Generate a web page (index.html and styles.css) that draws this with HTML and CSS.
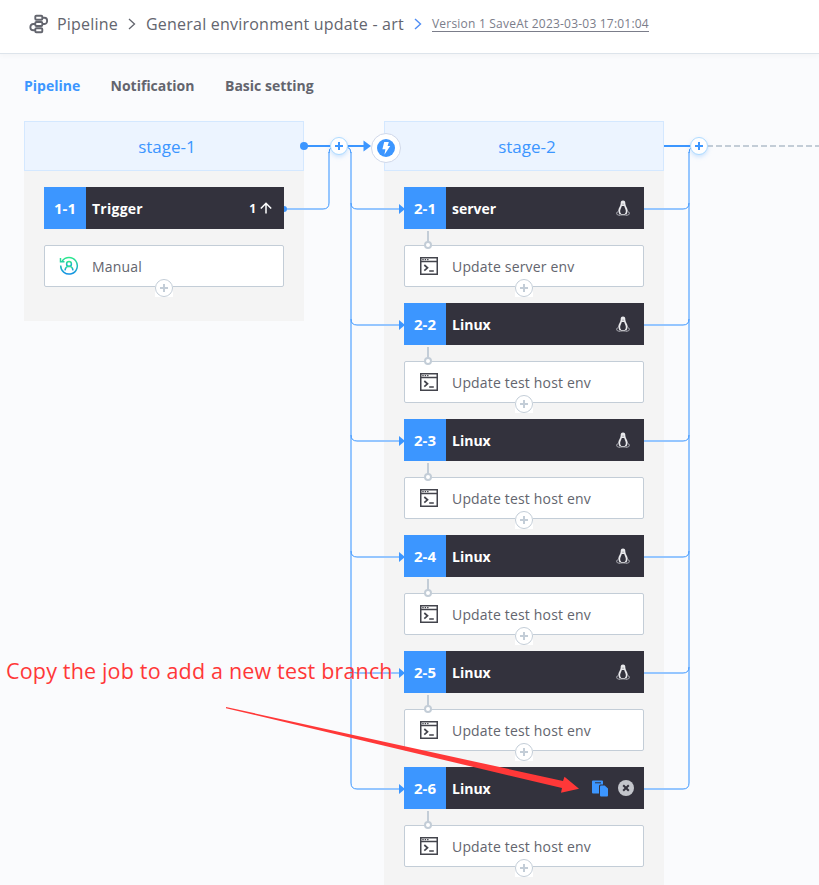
FILE: index.html
```
<!DOCTYPE html>
<html lang="en">
<head>
<meta charset="utf-8">
<title>Pipeline</title>
<link rel="stylesheet" href="styles.css">
</head>
<body>
<svg width="0" height="0" class="defs" aria-hidden="true">
  <defs>
    <linearGradient id="manual" x1="0" y1="0" x2="0" y2="1"><stop offset="0" stop-color="#2ce88c"/><stop offset="1" stop-color="#1592e6"/></linearGradient>
    <symbol id="plus" viewBox="0 0 18 18"><circle cx="9" cy="9" r="8.5" fill="#fff" stroke="#c3cdd7"/><path d="M9 5v8M5 9h8" stroke="#c3cdd7" stroke-width="2"/></symbol>
    <symbol id="term" viewBox="0 0 18 18"><path d="M.75.75h16.5v16.5H.75zM.75 4.6h16.5" fill="none" stroke="#43444c" stroke-width="1.5"/><path d="M2.3 2.6h1.4m1 0h1.4m1 0h1.4" stroke="#43444c" stroke-width="1.3"/><path d="M4.3 8l3.2 2.8-3.2 2.8M9.2 14h4.6" fill="none" stroke="#43444c" stroke-width="1.7"/></symbol>
    <symbol id="tux" viewBox="0 0 14 17"><path d="M7 .5C5.3.5 4.500 1.700 4.700 3.600 4.700 6 2.500 7.800 2.200 11L3.500 14.500h7L11.800 11C11.500 7.800 9.300 6 9.300 3.600 9.500 1.700 8.700.5 7 .5z" fill="#e9e9ec"/><path d="M5.800 6h2.400c.3 1.700 2 3.600 1.600 6.200L8.700 14H5.300l-1.100-1.800C3.800 9.600 5.500 7.700 5.800 6z" fill="#33323d"/><path d="M2.600 11.200L.7 12.800c-.5 1.300.8 2.200 3 2.700l1.700-1M11.400 11.200l1.900 1.600c.5 1.300-.8 2.200-3 2.700l-1.700-1" fill="none" stroke="#92929a" stroke-width="1.100"/><path d="M5 14.800h4" stroke="#d5d5d9"/><path d="M6 3.800h2L7 5z" fill="#85858d"/></symbol>
  </defs>
</svg>
<header class="topbar">
  <svg class="logo" width="20" height="20" viewBox="0 0 20 20" fill="none" stroke="#63656e" stroke-width="1.9"><rect x="6.300" y="1.700" width="7" height="4" rx="1"/><rect x="6.300" y="8" width="7" height="4" rx="1"/><rect x="6.300" y="14.300" width="7" height="4" rx="1"/><path d="M13.300 3.700h2.200c3.500 0 3.500 6.300 0 6.300h-2.200M6.300 10H4.500C.3 10 .3 16.300 4.500 16.300h1.800"/></svg>
  <span class="crumb root">Pipeline</span>
  <svg class="chev" width="8" height="14" viewBox="0 0 8 14"><path d="M1 2l5.500 5L1 12" fill="none" stroke="#63656e" stroke-width="1.300"/></svg>
  <span class="crumb name">General environment update - art</span>
  <svg class="chev blue" width="8" height="14" viewBox="0 0 8 14"><path d="M1 2l5.500 5L1 12" fill="none" stroke="#4f8df5" stroke-width="1.400"/></svg>
  <span class="version">Version 1 SaveAt 2023-03-03 17:01:04</span>
</header>
<main class="editor">
  <nav class="tabs"><a class="tab active">Pipeline</a><a class="tab notify">Notification</a><a class="tab basic">Basic setting</a></nav>
  <div class="stages">
    <section class="stage">
      <h2 class="stage-title">stage-1</h2>
      <div class="job">
        <div class="job-head"><span class="num">1-1</span><span class="job-name trigger">Trigger</span><span class="count">1</span><svg class="up" width="12" height="12" viewBox="0 0 12 12"><path d="M6 11.500V1.500M.8 6.500L6 1.300l5.200 5.200" fill="none" stroke="#fff" stroke-width="1.500"/></svg></div>
        <div class="atom"><svg width="20" height="20" viewBox="0 0 20 20" fill="none" stroke="url(#manual)" stroke-width="1.500"><path d="M3.200 5A8.300 8.300 0 1 1 1.700 9.500M1.500 2v3.700h4"/><circle cx="10" cy="8" r="2.400"/><path d="M6 14.300c.4-2.500 1.400-4 4-4s3.600 1.500 4 4"/></svg><span class="manual-label">Manual</span><svg class="add" width="18" height="18"><use href="#plus"/></svg></div>
      </div>
    </section>
    <section class="stage second">
      <h2 class="stage-title">stage-2</h2>
      <div class="job linked"><div class="job-head"><span class="num">2-1</span><span class="job-name server">server</span><svg class="tux" width="14" height="17"><use href="#tux"/></svg></div><div class="atom"><svg width="18" height="18"><use href="#term"/></svg><span class="server-label">Update server env</span><svg class="add" width="18" height="18"><use href="#plus"/></svg></div></div>
      <div class="job linked"><div class="job-head"><span class="num">2-2</span><span class="job-name">Linux</span><svg class="tux" width="14" height="17"><use href="#tux"/></svg></div><div class="atom"><svg width="18" height="18"><use href="#term"/></svg><span>Update test host env</span><svg class="add" width="18" height="18"><use href="#plus"/></svg></div></div>
      <div class="job linked"><div class="job-head"><span class="num">2-3</span><span class="job-name">Linux</span><svg class="tux" width="14" height="17"><use href="#tux"/></svg></div><div class="atom"><svg width="18" height="18"><use href="#term"/></svg><span>Update test host env</span><svg class="add" width="18" height="18"><use href="#plus"/></svg></div></div>
      <div class="job linked"><div class="job-head"><span class="num">2-4</span><span class="job-name">Linux</span><svg class="tux" width="14" height="17"><use href="#tux"/></svg></div><div class="atom"><svg width="18" height="18"><use href="#term"/></svg><span>Update test host env</span><svg class="add" width="18" height="18"><use href="#plus"/></svg></div></div>
      <div class="job linked"><div class="job-head"><span class="num">2-5</span><span class="job-name">Linux</span><svg class="tux" width="14" height="17"><use href="#tux"/></svg></div><div class="atom"><svg width="18" height="18"><use href="#term"/></svg><span>Update test host env</span><svg class="add" width="18" height="18"><use href="#plus"/></svg></div></div>
      <div class="job linked"><div class="job-head"><span class="num">2-6</span><span class="job-name">Linux</span>
        <svg class="copy" width="16" height="17" viewBox="0 0 16 17"><path d="M1 .5h9a1 1 0 0 1 1 1V4.500H8.500a1.500 1.500 0 0 0-1.500 1.500V13.500H1a1 1 0 0 1-1-1v-11a1 1 0 0 1 1-1z" fill="#3c96ff"/><path d="M3 2.800h6" stroke="#33323d" stroke-width="1"/><path d="M9 5.500h3.700L16 8.500v7a1 1 0 0 1-1 1H9a1 1 0 0 1-1-1v-9a1 1 0 0 1 1-1z" fill="#3c96ff"/></svg>
        <svg class="close" width="16" height="16" viewBox="0 0 16 16"><circle cx="8" cy="8" r="8" fill="#c4c6cc"/><path d="M5.200 5.200l5.600 5.600m0-5.600l-5.600 5.600" stroke="#33323d" stroke-width="2"/></svg></div><div class="atom"><svg width="18" height="18"><use href="#term"/></svg><span>Update test host env</span><svg class="add" width="18" height="18"><use href="#plus"/></svg></div></div>
    </section>
  </div>
</main>
<svg class="wires" width="819" height="885" viewBox="0 0 819 885" fill="none">
  <defs>
    <g id="branch"><path d="M357 209h43M644 209h39" stroke="#95c6ff" stroke-width="2"/><path d="M351 203q0 6 6 6M683 209q6 0 6-6" stroke="#3c96ff"/><path d="M399 204l6 5-6 5z" fill="#3c96ff"/></g>
  </defs>
  <path d="M329 152v51M351 152v631M689 152v631M287 209h36" stroke="#95c6ff" stroke-width="2"/>
  <path d="M323 209q6 0 6-6M332 147q-3 1-3 6M347 147q4 1 4 6M692 147q-3 1-3 6" stroke="#3c96ff"/>
  <path d="M284 206a3 3 0 0 1 0 6z" fill="#3c96ff"/>
  <use href="#branch"/><use href="#branch" y="116"/><use href="#branch" y="232"/><use href="#branch" y="348"/><use href="#branch" y="464"/><use href="#branch" y="580"/>
  <path d="M304 146h62M664 146h27" stroke="#3c96ff" stroke-width="2"/><circle cx="304" cy="146" r="4" fill="#3c96ff"/><path d="M363.500 140.500l7.500 5.500-7.500 5.500z" fill="#3c96ff"/>
  <path d="M708 146h111" stroke="#c3cdd7" stroke-width="2" stroke-dasharray="6 3" stroke-dashoffset="1"/>
  <g class="node"><circle cx="339" cy="146" r="8.500" fill="#fff" stroke="#addaff"/><circle cx="699" cy="146" r="8.500" fill="#fff" stroke="#addaff"/></g>
  <path d="M339 142v8M335 146h8M699 142v8M695 146h8" stroke="#3c96ff" stroke-width="2"/>
  <circle cx="386" cy="148" r="14.500" fill="#fff" stroke="#d0d8ea"/><circle cx="386" cy="148" r="9" fill="#3c96ff"/><path d="M384.200 142h4.600l-1.200 4h2.600l-5.800 8.800 1-5.600h-3z" fill="#fff"/>
</svg>
<svg class="pointer" width="819" height="885" viewBox="0 0 819 885"><path d="M226 707L563 781l1.500-4.300 14.500 12-18 4 1-4.700L226 708.200z" fill="#ff3838"/></svg>
<p class="note">Copy the job to add a new test branch</p>
</body>
</html>
```
FILE: styles.css
```
*, *::before, *::after { box-sizing: border-box; }
body { margin: 0; width: 819px; height: 885px; overflow: hidden; position: relative; background: #fafbfd; color: #63656e; font-family: "Open Sans", "Noto Sans", sans-serif; }
svg { display: block; flex: none; }
.defs { position: absolute; }
.topbar { height: 54px; display: flex; align-items: center; padding: 0 0 6px 29px; background: #fff; border-bottom: 1px solid #dde4eb; box-shadow: 0 2px 5px rgba(0,0,0,.03); white-space: nowrap; }
.crumb { font-size: 16px; line-height: 24px; letter-spacing: .22px; }
.root { width: 61px; margin-left: 8px; }
.name { width: 258px; }
.chev { margin: 0 10px; }
.version { font-size: 12px; line-height: 15px; width: 217px; margin-top: 1px; border-bottom: 1px solid #7b7d8a; color: #7b7d8a; white-space: nowrap; letter-spacing: .21px; }
.tabs { display: flex; height: 67px; padding: 20px 24px 0; font-size: 14px; line-height: 24px; font-weight: 700; white-space: nowrap; }
.tab { width: 57px; margin-right: 29.500px; }
.notify { width: 85px; }
.active { color: #3c96ff; }
.stages { display: flex; align-items: flex-start; gap: 80px; padding-left: 24px; }
.stage { width: 280px; background: #f4f4f4; padding-bottom: 34px; }
.stage-title { margin: 0 0 16px; height: 50px; line-height: 50px; border: 1px solid #d4e8ff; background: #ecf4ff; color: #3c96ff; font-size: 17px; font-weight: 400; text-align: center; padding-left: 6px; }
.job { margin: 0 20px 16px; }
.stage:not(.second) .job { margin-bottom: 0; }
.job-head { height: 42px; display: flex; align-items: center; background: #33323d; color: #fff; font-weight: 700; }
.num { width: 42px; height: 42px; line-height: 43px; background: #3c96ff; text-align: center; font-size: 15px; }
.job-name { margin-left: 6px; font-size: 14px; flex: 1; }
.trigger { letter-spacing: .25px; }
.count { font-size: 12px; margin-right: 4px; }
.up { margin-right: 12px; }
.tux { margin-right: 14px; }
.copy { margin-right: 10px; }
.close { margin-right: 10px; }
.atom { position: relative; height: 42px; margin-top: 16px; padding-left: 15px; display: flex; align-items: center; background: #fff; border: 1px solid #c3cdd7; border-radius: 2px; font-size: 14px; letter-spacing: .17px; }
.atom > span { margin-left: 14px; }
.stage:not(.second) .atom { padding-left: 14px; }
.stage:not(.second) .atom > span { margin-left: 13px; }
.add { position: absolute; left: 110px; top: 33px; background: #fff; }
.linked .atom::before { content: ""; position: absolute; left: 22px; top: -15px; width: 2px; height: 13px; background: #c3cdd7; }
.linked .atom::after { content: ""; position: absolute; left: 19px; top: -5px; width: 8px; height: 8px; border: 2px solid #c3cdd7; border-radius: 50%; background: #fff; }
.wires, .pointer { position: absolute; left: 0; top: 0; }
.node { filter: drop-shadow(0 2px 2px rgba(60,150,255,.25)); }
.note { position: absolute; left: 6px; top: 656px; margin: 0; font-size: 21.500px; line-height: 30px; color: #ff3838; white-space: nowrap; letter-spacing: .17px; }
```
